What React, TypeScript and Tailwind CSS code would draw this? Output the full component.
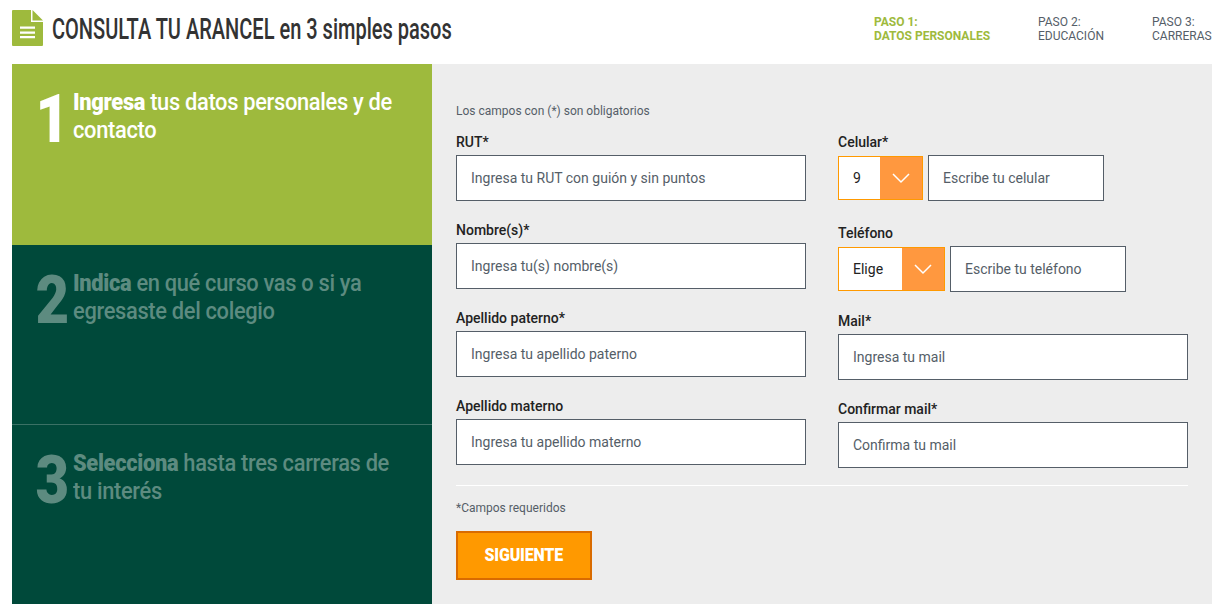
const font = { fontFamily: 'Roboto, sans-serif' };

function Field({ label, placeholder, className = '' }: { label: string; placeholder: string; className?: string }) {
  return (
    <div className={className}>
      <label className="block h-[18px] text-[14px] leading-[18px] font-medium text-[#222]">{label}</label>
      <div className="mt-[4px] flex h-[46px] w-[350px] items-center border border-[#555e68] bg-white pl-[14px] text-[14px] text-[#555e68]">
        {placeholder}
      </div>
    </div>
  );
}

function PhoneField({ label, value, placeholder, selectWidth, className = '' }: { label: string; value: string; placeholder: string; selectWidth: string; className?: string }) {
  return (
    <div className={className}>
      <label className="block h-[18px] text-[14px] leading-[18px] font-medium text-[#222]">{label}</label>
      <div className="mt-[4px] flex h-[46px] items-center gap-[5px]">
        <div className={`flex h-[44px] ${selectWidth} border border-[#ff9900] bg-white`}>
          <span className="flex flex-1 items-center pl-[14px] text-[14px] text-[#222]">{value}</span>
          <span className="flex w-[42px] items-center justify-center bg-[#ff983f]">
            <svg width="20" height="12" viewBox="0 0 20 12" fill="none" stroke="#fff" strokeWidth="1.5">
              <path d="M2 2l8 8 8-8" />
            </svg>
          </span>
        </div>
        <div className="flex h-[46px] w-[176px] items-center border border-[#555e68] bg-white pl-[14px] text-[14px] text-[#555e68]">
          {placeholder}
        </div>
      </div>
    </div>
  );
}

function Step({ n, bold, rest, line2, active, className = '' }: { n: string; bold: string; rest: string; line2: string; active?: boolean; className?: string }) {
  return (
    <div className={`flex pl-[24px] pt-[24px] ${active ? 'bg-[#9eba3d] text-white' : 'bg-[#00493a] text-[#5d8b80]'} ${className}`}>
      <div className="flex h-[64px] w-[37px] origin-left scale-x-[0.88] justify-center text-[66px] leading-[64px] font-black">{n}</div>
      <div className="w-[365px] origin-left scale-x-[0.91] text-[24px] leading-[28px] font-medium tracking-[-0.35px]">
        <div><strong className="font-black">{bold}</strong> {rest}</div>
        <div>{line2}</div>
      </div>
    </div>
  );
}

export default function App() {
  return (
    <div className="h-[611px] w-[1218px] overflow-hidden bg-white" style={font}>
      <header className="flex h-[64px] items-start">
        <svg className="ml-[12px] mt-[10px] shrink-0" width="31" height="36" viewBox="0 0 31 36">
          <path d="M1 0h18v12h12v23a1 1 0 0 1-1 1H1a1 1 0 0 1-1-1V1a1 1 0 0 1 1-1z" fill="#9eba3d" />
          <path d="M20.500 0L31 10.500H20.500z" fill="#9eba3d" />
          <path d="M8 16.500h15v2.300H8zM8 21.500h15v2.300H8zM8 26h15v2.300H8z" fill="#fff" />
        </svg>
        <h1 className="ml-[9px] mt-[12px] w-[290px] shrink-0 origin-left scale-x-[0.69] whitespace-nowrap text-[29px] leading-[34px] font-medium text-[#333]">
          CONSULTA TU ARANCEL en 3 simples pasos
        </h1>
        <nav className="ml-[532px] mt-[15px] flex shrink-0 text-[12px] leading-[14px] text-[#555e68]">
          <div className="w-[164px] font-bold text-[#9eba3d]">PASO 1:<br />DATOS PERSONALES</div>
          <div className="w-[114px]">PASO 2:<br />EDUCACIÓN</div>
          <div>PASO 3:<br />CARRERAS</div>
        </nav>
      </header>
      <main className="ml-[12px] flex h-[540px] w-[1200px]">
        <aside className="w-[420px] overflow-hidden">
          <Step n="1" bold="Ingresa" rest="tus datos personales y de" line2="contacto" active className="h-[181px]" />
          <Step n="2" bold="Indica" rest="en qué curso vas o si ya" line2="egresaste del colegio" className="h-[179px]" />
          <Step n="3" bold="Selecciona" rest="hasta tres carreras de" line2="tu interés" className="h-[180px] border-t border-[#3b7165]" />
        </aside>
        <section className="flex-1 bg-[#ededed] px-[24px] pt-[40px]">
          <p className="text-[12px] leading-[15px] text-[#555e68]">Los campos con (*) son obligatorios</p>
          <div className="mt-[14px] flex justify-between">
            <div>
              <Field label="RUT*" placeholder="Ingresa tu RUT con guión y sin puntos" />
              <Field className="mt-[20px]" label="Nombre(s)*" placeholder="Ingresa tu(s) nombre(s)" />
              <Field className="mt-[20px]" label="Apellido paterno*" placeholder="Ingresa tu apellido paterno" />
              <Field className="mt-[20px]" label="Apellido materno" placeholder="Ingresa tu apellido materno" />
            </div>
            <div>
              <PhoneField label="Celular*" value="9" placeholder="Escribe tu celular" selectWidth="w-[85px]" />
              <PhoneField className="mt-[23px]" label="Teléfono" value="Elige" placeholder="Escribe tu teléfono" selectWidth="w-[107px]" />
              <Field className="mt-[20px]" label="Mail*" placeholder="Ingresa tu mail" />
              <Field className="mt-[20px]" label="Confirmar mail*" placeholder="Confirma tu mail" />
            </div>
          </div>
          <div className="mt-[17px] h-px bg-white" />
          <p className="mt-[15px] text-[12px] leading-[15px] text-[#555e68]">*Campos requeridos</p>
          <button className="mt-[15px] h-[49px] w-[136px] border-2 border-[#d96b00] bg-[#ff9900] text-white">
            <span className="inline-block scale-x-[0.84] text-[19px] font-black tracking-[-0.2px]">SIGUIENTE</span>
          </button>
        </section>
      </main>
    </div>
  );
}
